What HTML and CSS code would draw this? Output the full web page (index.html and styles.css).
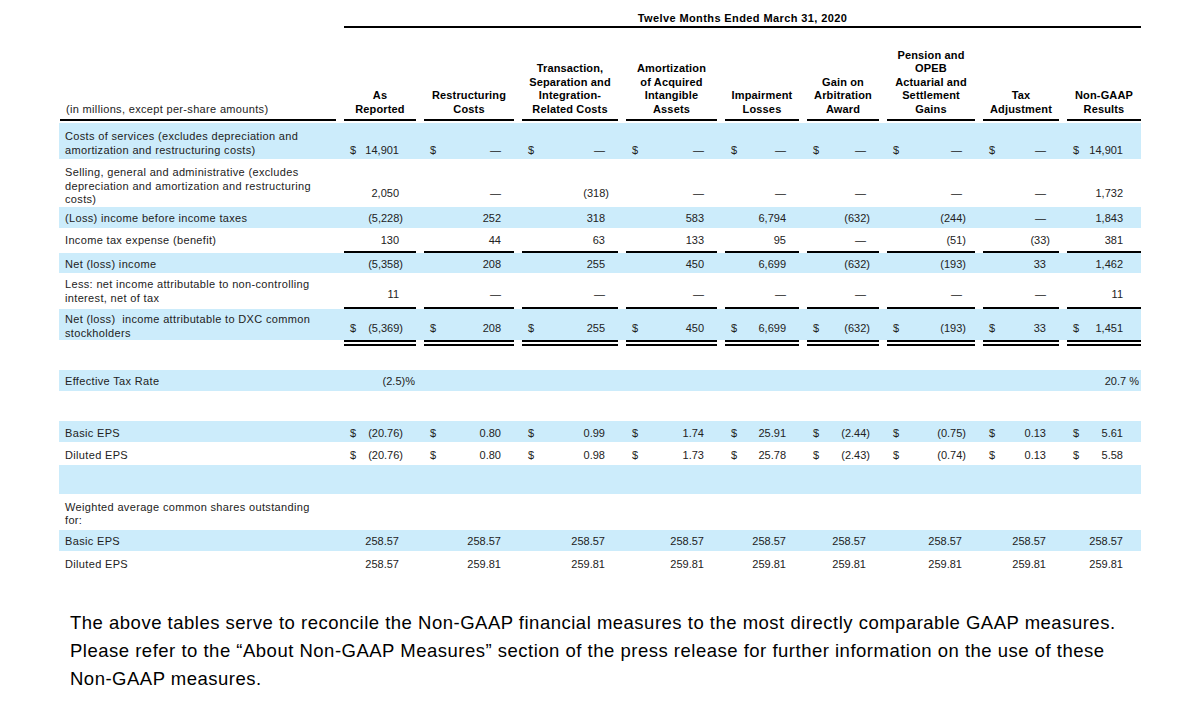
FILE: index.html
```html
<!DOCTYPE html>
<html lang="en">
<head>
<meta charset="utf-8">
<title>Non-GAAP Reconciliation</title>
<link rel="stylesheet" href="styles.css">
</head>
<body>
<section class="recon">
  <div class="grid period"><div class="period-title">Twelve Months Ended March 31, 2020</div></div>
  <div class="grid heads">
    <div class="h-label">(in millions, except per-share amounts)</div>
    <div class="h">As<br>Reported</div>
    <div class="h">Restructuring<br>Costs</div>
    <div class="h">Transaction,<br>Separation and<br>Integration-<br>Related Costs</div>
    <div class="h">Amortization<br>of Acquired<br>Intangible<br>Assets</div>
    <div class="h">Impairment<br>Losses</div>
    <div class="h">Gain on<br>Arbitration<br>Award</div>
    <div class="h">Pension and<br>OPEB<br>Actuarial and<br>Settlement<br>Gains</div>
    <div class="h">Tax<br>Adjustment</div>
    <div class="h">Non-GAAP<br>Results</div>
  </div>

  <div class="rows">
    <div class="grid row blue lead">
      <div class="lbl">Costs of services (excludes depreciation and<br>amortization and restructuring costs)</div>
      <div class="v"><span>$</span><span class="n">14,901</span></div>
      <div class="v"><span>$</span><span class="n">—</span></div>
      <div class="v"><span>$</span><span class="n">—</span></div>
      <div class="v"><span>$</span><span class="n">—</span></div>
      <div class="v"><span>$</span><span class="n">—</span></div>
      <div class="v"><span>$</span><span class="n">—</span></div>
      <div class="v"><span>$</span><span class="n">—</span></div>
      <div class="v"><span>$</span><span class="n">—</span></div>
      <div class="v"><span>$</span><span class="n">14,901</span></div>
    </div>

    <div class="grid row lead flush sga">
      <div class="lbl">Selling, general and administrative (excludes<br>depreciation and amortization and restructuring<br>costs)</div>
      <div class="v"><span class="n">2,050</span></div>
      <div class="v"><span class="n">—</span></div>
      <div class="v"><span class="n neg">(318)</span></div>
      <div class="v"><span class="n">—</span></div>
      <div class="v"><span class="n">—</span></div>
      <div class="v"><span class="n">—</span></div>
      <div class="v"><span class="n">—</span></div>
      <div class="v"><span class="n">—</span></div>
      <div class="v"><span class="n">1,732</span></div>
    </div>

    <div class="grid row blue">
      <div class="lbl">(Loss) income before income taxes</div>
      <div class="v"><span class="n neg">(5,228)</span></div>
      <div class="v"><span class="n">252</span></div>
      <div class="v"><span class="n">318</span></div>
      <div class="v"><span class="n">583</span></div>
      <div class="v"><span class="n">6,794</span></div>
      <div class="v"><span class="n neg">(632)</span></div>
      <div class="v"><span class="n neg">(244)</span></div>
      <div class="v"><span class="n">—</span></div>
      <div class="v"><span class="n">1,843</span></div>
    </div>

    <div class="grid row ruled">
      <div class="lbl">Income tax expense (benefit)</div>
      <div class="v"><span class="n">130</span></div>
      <div class="v"><span class="n">44</span></div>
      <div class="v"><span class="n">63</span></div>
      <div class="v"><span class="n">133</span></div>
      <div class="v"><span class="n">95</span></div>
      <div class="v"><span class="n">—</span></div>
      <div class="v"><span class="n neg">(51)</span></div>
      <div class="v"><span class="n neg">(33)</span></div>
      <div class="v"><span class="n">381</span></div>
    </div>
    <div class="grid rule"><i></i><i></i><i></i><i></i><i></i><i></i><i></i><i></i><i></i><i></i></div>

    <div class="grid row blue tight">
      <div class="lbl">Net (loss) income</div>
      <div class="v"><span class="n neg">(5,358)</span></div>
      <div class="v"><span class="n">208</span></div>
      <div class="v"><span class="n">255</span></div>
      <div class="v"><span class="n">450</span></div>
      <div class="v"><span class="n">6,699</span></div>
      <div class="v"><span class="n neg">(632)</span></div>
      <div class="v"><span class="n neg">(193)</span></div>
      <div class="v"><span class="n">33</span></div>
      <div class="v"><span class="n">1,462</span></div>
    </div>

    <div class="grid row nci">
      <div class="lbl">Less: net income attributable to non-controlling<br>interest, net of tax</div>
      <div class="v"><span class="n">11</span></div>
      <div class="v"><span class="n">—</span></div>
      <div class="v"><span class="n">—</span></div>
      <div class="v"><span class="n">—</span></div>
      <div class="v"><span class="n">—</span></div>
      <div class="v"><span class="n">—</span></div>
      <div class="v"><span class="n">—</span></div>
      <div class="v"><span class="n">—</span></div>
      <div class="v"><span class="n">11</span></div>
    </div>
    <div class="grid rule"><i></i><i></i><i></i><i></i><i></i><i></i><i></i><i></i><i></i><i></i></div>

    <div class="grid row blue attrib">
      <div class="lbl">Net (loss)&nbsp; income attributable to DXC common<br>stockholders</div>
      <div class="v"><span>$</span><span class="n neg">(5,369)</span></div>
      <div class="v"><span>$</span><span class="n">208</span></div>
      <div class="v"><span>$</span><span class="n">255</span></div>
      <div class="v"><span>$</span><span class="n">450</span></div>
      <div class="v"><span>$</span><span class="n">6,699</span></div>
      <div class="v"><span>$</span><span class="n neg">(632)</span></div>
      <div class="v"><span>$</span><span class="n neg">(193)</span></div>
      <div class="v"><span>$</span><span class="n">33</span></div>
      <div class="v"><span>$</span><span class="n">1,451</span></div>
    </div>
    <div class="grid dbl"><i></i><i></i><i></i><i></i><i></i><i></i><i></i><i></i><i></i><i></i></div>

    <div class="grid row blue">
      <div class="lbl">Effective Tax Rate</div>
      <div class="v"><span class="n pct">(2.5)%</span></div>
      <div class="v"></div>
      <div class="v"></div>
      <div class="v"></div>
      <div class="v"></div>
      <div class="v"></div>
      <div class="v"></div>
      <div class="v"></div>
      <div class="v"><span class="n pct">20.7 %</span></div>
    </div>
    <div class="spacer"></div>

    <div class="grid row blue">
      <div class="lbl">Basic EPS</div>
      <div class="v"><span>$</span><span class="n neg">(20.76)</span></div>
      <div class="v"><span>$</span><span class="n">0.80</span></div>
      <div class="v"><span>$</span><span class="n">0.99</span></div>
      <div class="v"><span>$</span><span class="n">1.74</span></div>
      <div class="v"><span>$</span><span class="n">25.91</span></div>
      <div class="v"><span>$</span><span class="n neg">(2.44)</span></div>
      <div class="v"><span>$</span><span class="n neg">(0.75)</span></div>
      <div class="v"><span>$</span><span class="n">0.13</span></div>
      <div class="v"><span>$</span><span class="n">5.61</span></div>
    </div>

    <div class="grid row lead">
      <div class="lbl">Diluted EPS</div>
      <div class="v"><span>$</span><span class="n neg">(20.76)</span></div>
      <div class="v"><span>$</span><span class="n">0.80</span></div>
      <div class="v"><span>$</span><span class="n">0.98</span></div>
      <div class="v"><span>$</span><span class="n">1.73</span></div>
      <div class="v"><span>$</span><span class="n">25.78</span></div>
      <div class="v"><span>$</span><span class="n neg">(2.43)</span></div>
      <div class="v"><span>$</span><span class="n neg">(0.74)</span></div>
      <div class="v"><span>$</span><span class="n">0.13</span></div>
      <div class="v"><span>$</span><span class="n">5.58</span></div>
    </div>

    <div class="band"></div>

    <div class="grid row lead">
      <div class="lbl">Weighted average common shares outstanding<br>for:</div>
    </div>

    <div class="grid row blue">
      <div class="lbl">Basic EPS</div>
      <div class="v"><span class="n">258.57</span></div>
      <div class="v"><span class="n">258.57</span></div>
      <div class="v"><span class="n">258.57</span></div>
      <div class="v"><span class="n">258.57</span></div>
      <div class="v"><span class="n">258.57</span></div>
      <div class="v"><span class="n">258.57</span></div>
      <div class="v"><span class="n">258.57</span></div>
      <div class="v"><span class="n">258.57</span></div>
      <div class="v"><span class="n">258.57</span></div>
    </div>

    <div class="grid row lead">
      <div class="lbl">Diluted EPS</div>
      <div class="v"><span class="n">258.57</span></div>
      <div class="v"><span class="n">259.81</span></div>
      <div class="v"><span class="n">259.81</span></div>
      <div class="v"><span class="n">259.81</span></div>
      <div class="v"><span class="n">259.81</span></div>
      <div class="v"><span class="n">259.81</span></div>
      <div class="v"><span class="n">259.81</span></div>
      <div class="v"><span class="n">259.81</span></div>
      <div class="v"><span class="n">259.81</span></div>
    </div>
  </div>
</section>

<p class="note">The above tables serve to reconcile the Non-GAAP financial measures to the most directly comparable GAAP measures.<br>Please refer to the “About Non-GAAP Measures” section of the press release for further information on the use of these<br>Non-GAAP measures.</p>
</body>
</html>
```

FILE: styles.css
```css
html, body {
  margin: 0;
  padding: 0;
  background: #ffffff;
}

body {
  font-family: "Liberation Sans", Arial, sans-serif;
  color: #222222;
}

.recon {
  margin-left: 59px;
  width: 1082px;
  font-size: 11px;
  line-height: 13.5px;
}

.grid {
  display: grid;
  grid-template-columns: 277px 72px 90px 96px 91px 74px 72px 88px 76px 74px;
  column-gap: 8px;
}

/* period header */
.period {
  padding-top: 11px;
  line-height: 14px;
}
.period-title {
  grid-column: 2 / -1;
  text-align: center;
  font-weight: bold;
  letter-spacing: 0.4px;
  color: #000;
  padding-bottom: 1px;
  border-bottom: 2px solid #000;
}

/* column headings */
.heads {
  padding-top: 20.5px;
  align-items: end;
}
.h-label,
.h {
  padding-bottom: 3px;
  border-bottom: 2px solid #000;
}
.h-label {
  padding-left: 6px;
  margin-left: 1px;
  letter-spacing: 0.33px;
  color: #222;
}
.h {
  text-align: center;
  font-weight: bold;
  letter-spacing: 0.15px;
  color: #000;
}

/* body rows */
.rows {
  margin-top: 2px;
}

.row {
  align-items: end;
  padding: 5.5px 0 2px;
}
.row.blue,
.band {
  background: #ccecfb;
}
.row.lead { padding: 7px 0 2px; }
.row.flush { padding-bottom: 0; }
.row.ruled { padding: 6.5px 0 3.5px; }
.row.tight { padding: 4.5px 0 1.5px; }
.row.attrib { padding: 4px 0 0; }

.lbl {
  padding-left: 6px;
  letter-spacing: 0.34px;
  white-space: nowrap;
}

.v {
  display: flex;
  align-items: flex-end;
  padding: 0 13px 0 6px;
  white-space: nowrap;
}
.row > .v:nth-child(2) { padding-right: 17px; }
.row > .v:last-child { padding-right: 18px; }

.v .n { margin-left: auto; }
.v .neg { margin-right: -4px; }
.v .pct { margin-right: -16px; }

.sga > .v { margin-bottom: 6.5px; }
.nci > .v { margin-bottom: 3.5px; }
.attrib > .v { margin-bottom: 4.5px; }

/* underline rows */
.rule { height: 2px; }
.rule > i { background: #000; }
.rule > i:first-child { background: none; }

.dbl { height: 29.5px; }
.dbl > i { border-top: 6px double #000; }
.dbl > i:first-child { border-top: none; }

.spacer { height: 30.5px; }
.band { height: 29px; }

/* footnote */
.note {
  margin: 36px 0 0 70px;
  font-size: 18.5px;
  line-height: 27.75px;
  letter-spacing: 0.5px;
  color: #000;
  white-space: nowrap;
}
```
